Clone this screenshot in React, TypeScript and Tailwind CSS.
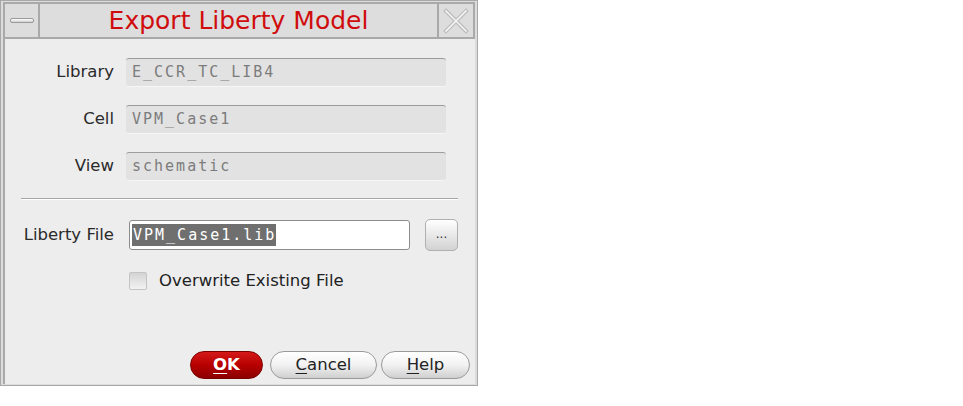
import React from "react";

const sans = { fontFamily: '"DejaVu Sans", "Liberation Sans", sans-serif' };
const mono = { fontFamily: '"DejaVu Sans Mono", "Liberation Mono", monospace' };

const ReadOnlyField = ({ label, value }: { label: string; value: string }) => (
  <div className="flex items-center h-[29px]">
    <div className="w-[113px] text-right text-[16.5px] text-[#2a2a2a]">{label}</div>
    <div
      className="ml-[12px] w-[320px] h-[29px] flex items-center pl-[6px] bg-[#e2e2e2] border-t border-[#9c9c9c] border-b border-b-[#f6f6f6] rounded-[3px] text-[15px] tracking-[2px] text-[#7c7c7c]"
      style={mono}
    >
      {value}
    </div>
  </div>
);

const PillButton = ({
  children,
  width,
  primary,
}: {
  children: React.ReactNode;
  width: string;
  primary?: boolean;
}) => (
  <button
    className={`${width} h-[28px] rounded-full text-[16.5px] flex items-center justify-center ${
      primary
        ? "bg-gradient-to-b from-[#d41818] via-[#b80000] to-[#8c0000] text-white font-bold border border-[#7a0000]"
        : "bg-gradient-to-b from-[#ffffff] via-[#f2f2f2] to-[#cfcfcf] text-[#222] border border-[#9a9a9a]"
    }`}
  >
    {children}
  </button>
);

export default function App() {
  return (
    <div className="w-[963px] h-[406px] bg-white" style={sans}>
      <div className="w-[478px] h-[386px] bg-[#dcdcdc] border border-[#a8a8a8] pl-[2px] pt-[1px] pr-[2px] pb-[1px] flex flex-col">
        {/* Title bar */}
        <div className="h-[37px] flex border-b-2 border-[#a9a9a9] bg-[#dddddd]">
          <div className="w-[37px] border-x-2 border-t-2 border-[#a9a9a9] flex items-center justify-center">
            <div className="w-[24px] h-[5px] rounded-[2px] border border-[#9a9a9a] bg-gradient-to-b from-white to-[#d0d0d0]" />
          </div>
          <div className="flex-1 flex items-center justify-center text-[25px] text-[#d00c0c] border-t-2 border-[#a9a9a9] pt-[1px]">
            Export Liberty Model
          </div>
          <div className="w-[38px] border-x-2 border-t-2 border-[#a9a9a9] flex items-center justify-center">
            <svg width="26" height="26" viewBox="0 0 26 26">
              <path d="M3 3 L23 23 M23 3 L3 23" stroke="#bcbcbc" strokeWidth="4" strokeLinecap="square" />
              <path d="M3 3 L23 23 M23 3 L3 23" stroke="#f4f4f4" strokeWidth="1.6" strokeLinecap="square" />
            </svg>
          </div>
        </div>

        {/* Body */}
        <div className="flex-1 bg-[#ededed] border-l-2 border-[#a9a9a9] flex flex-col">
          <div className="pt-[19px] flex flex-col gap-[18px] -ml-[4px]">
            <ReadOnlyField label="Library" value="E_CCR_TC_LIB4" />
            <ReadOnlyField label="Cell" value="VPM_Case1" />
            <ReadOnlyField label="View" value="schematic" />
          </div>

          <div className="mt-[17px] ml-[16px] w-[437px] border-t border-[#a6a6a6] border-b border-b-white" />

          <div className="mt-[19px] flex items-center -ml-[4px]">
            <div className="w-[113px] text-right text-[16.5px] text-[#2a2a2a] whitespace-nowrap">Liberty File</div>
            <div className="ml-[15px] w-[281px] h-[30px] bg-white border border-[#8c8c8c] rounded-[3px] flex items-center pl-[2px]">
              <span
                className="bg-[#6f6f6f] text-white text-[15px] tracking-[2px] h-[22px] flex items-center pl-[1px]"
                style={mono}
              >
                VPM_Case1.lib
              </span>
            </div>
            <button className="ml-[15px] w-[33px] h-[32px] rounded-[5px] bg-gradient-to-b from-white to-[#d2d2d2] border border-[#b0b0b0] text-[12px] text-[#333] leading-none pb-[2px]">
              ...
            </button>
          </div>

          <div className="mt-[18px] flex items-center ml-[124px]">
            <div className="w-[18px] h-[18px] rounded-[2px] border border-[#c4c4c4] bg-gradient-to-b from-[#d4d4d4] to-[#f2f2f2]" />
            <span className="ml-[12px] text-[16.5px] text-[#222]">Overwrite Existing File</span>
          </div>

          <div className="mt-auto mb-[5px] flex justify-end pr-[5px]">
            <PillButton width="w-[73px]" primary>
              <span className="underline underline-offset-[3px]">O</span>K
            </PillButton>
            <div className="w-[7px]" />
            <PillButton width="w-[107px]">
              <span className="underline underline-offset-[3px]">C</span>ancel
            </PillButton>
            <div className="w-[4px]" />
            <PillButton width="w-[89px]">
              <span className="underline underline-offset-[3px]">H</span>elp
            </PillButton>
          </div>
        </div>
      </div>
    </div>
  );
}
